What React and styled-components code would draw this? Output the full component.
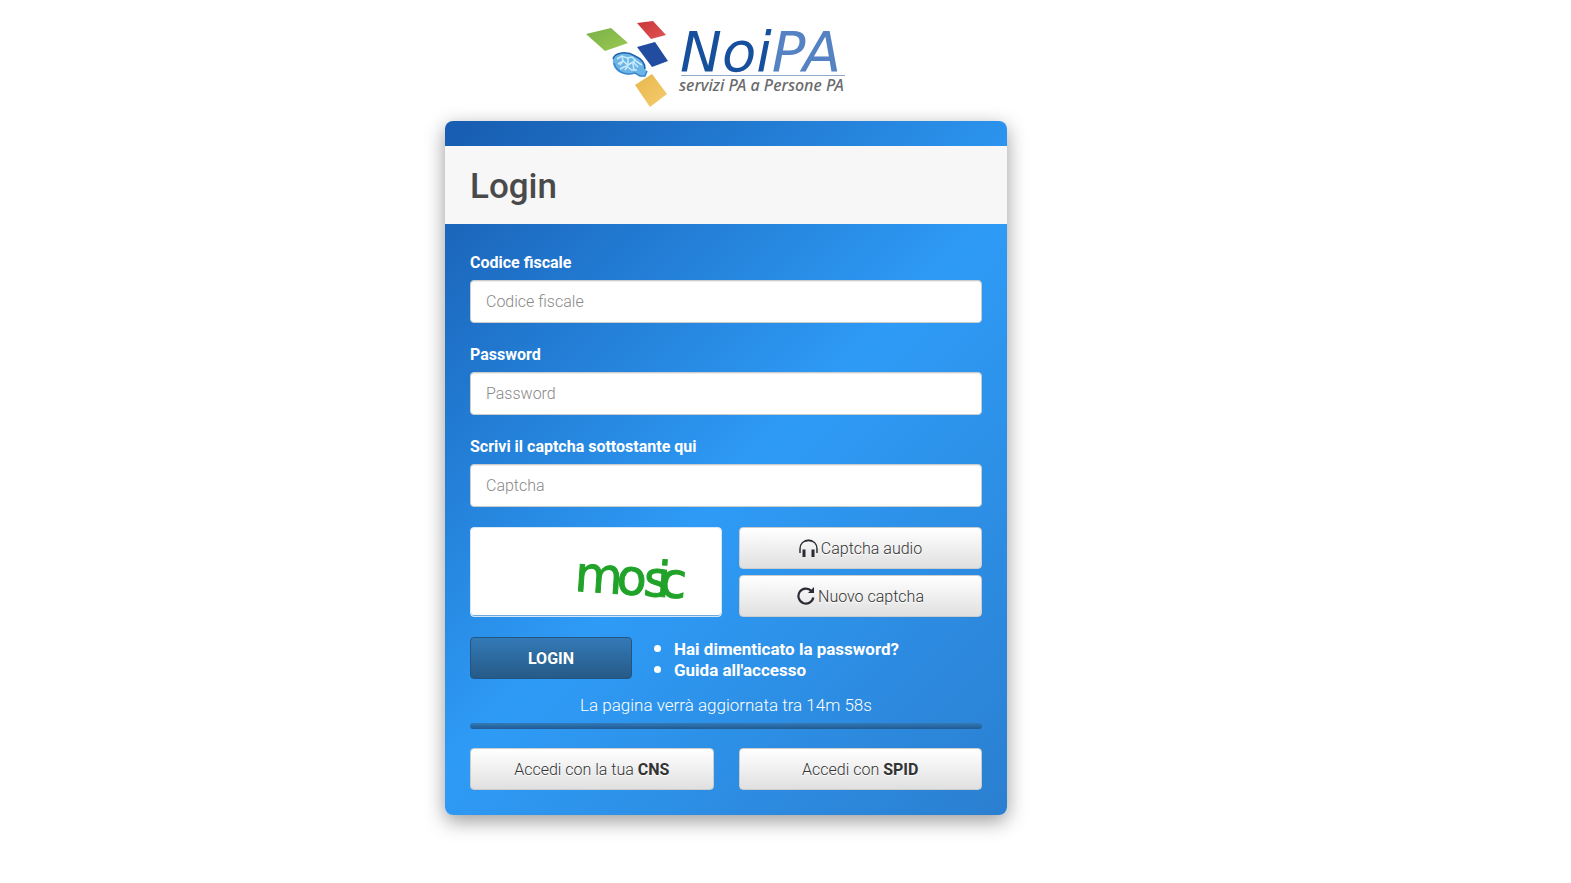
import React, { useState } from "react";
import styled, { createGlobalStyle } from "styled-components";

const GlobalStyle = createGlobalStyle`
  * {
    box-sizing: border-box;
  }
  body {
    margin: 0;
    background: #fff;
    color: #fff;
    font-family: Roboto, "Liberation Sans", sans-serif;
    font-size: 16px;
    font-weight: 300;
  }
`;

const Page = styled.div`
  display: grid;
  grid-template-columns: minmax(16px, 445fr) minmax(0, 562px) minmax(16px, 564fr);
  padding: 16px 0 68px;
`;
const Content = styled.main`
  grid-column: 2;
`;
const LogoWrap = styled.div`
  display: flex;
  padding-left: 25%;
  height: 105px;
`;
const LogoSvg = styled.svg`
  width: 264px;
  height: 96px;
  overflow: visible;
`;
const LogoName = styled.text`
  font: italic 400 56px "DejaVu Sans", sans-serif;
`;
const LogoClaim = styled.text`
  font: italic 500 16px "Noto Sans", sans-serif;
  fill: #6a6a6c;
`;

const Card = styled.section`
  padding: 25px 0;
  border-radius: 8px;
  background: linear-gradient(135deg, #175cb0 0%, #2e9bf6 52%, #2b7fd0 100%);
  box-shadow: 0 6px 20px rgba(0, 0, 0, 0.4);
`;
const CardHeader = styled.header`
  display: flex;
  align-items: center;
  height: 78px;
  padding: 2px 25px 0;
  background: #f7f7f7;
`;
const Title = styled.h1`
  margin: 0;
  color: #4a4a4a;
  font-size: 35px;
  font-weight: 500;
`;
const Form = styled.form`
  display: flex;
  flex-direction: column;
  padding: 26px 25px 0;
`;

const Field = styled.div`
  display: flex;
  flex-direction: column;
  gap: 4px;
  margin-bottom: 19px;
`;
const Label = styled.label`
  font-weight: 700;
  line-height: 26px;
`;
const Input = styled.input`
  height: 43px;
  padding: 0 15px;
  border: 1px solid #ccc;
  border-radius: 4px;
  background: #fff;
  box-shadow: inset 0 1px 1px rgba(0, 0, 0, 0.075);
  color: #555;
  font: inherit;

  &::placeholder {
    color: #888;
    opacity: 1;
  }
`;

const CaptchaRow = styled.div`
  display: grid;
  grid-template-columns: 252fr 243fr;
  gap: 17px;
  margin: 1px 0 20px;
`;
const CaptchaBox = styled.div`
  overflow: hidden;
  border: 1px solid #d5e6f6;
  border-radius: 4px;
  background: #fff;
  box-shadow: inset 0 -1px 0 #6fa9dc;
`;
const CaptchaDrawing = styled.svg`
  display: block;
`;
const CaptchaText = styled.text`
  font: 400 49px "DejaVu Sans", sans-serif;
  fill: #21a229;
  stroke: #21a229;
  stroke-width: 1;
`;
const CaptchaButtons = styled.div`
  display: flex;
  flex-direction: column;
  gap: 6px;
`;

const Button = styled.button`
  display: flex;
  justify-content: center;
  align-items: center;
  gap: 3px;
  height: 42px;
  padding: 0 12px;
  border: 1px solid #ccc;
  border-radius: 4px;
  background: linear-gradient(#fff, #e0e0e0);
  color: #333;
  font: inherit;
  text-shadow: 0 1px 0 #fff;
  white-space: pre;
  cursor: pointer;
`;
const LoginButton = styled(Button)`
  width: 162px;
  border-color: #245580;
  background: linear-gradient(#337ab7, #265a88);
  color: #fff;
  font-weight: 700;
  text-shadow: 0 -1px 0 rgba(0, 0, 0, 0.2);
`;
const Strong = styled.strong`
  font-weight: 700;
`;

const LoginRow = styled.div`
  display: flex;
  align-items: center;
`;
const Links = styled.ul`
  margin: 0;
  padding-left: 42px;
  font-size: 17px;
  font-weight: 700;
  line-height: 21px;
`;
const LinkItem = styled.li`
  height: 21px;

  &::marker {
    font-size: 22px;
  }
`;
const Link = styled.a`
  color: #fff;
  text-decoration: none;
`;

const Timer = styled.p`
  margin: 13px 0 5px;
  font-size: 17px;
  font-weight: 300;
  line-height: 26px;
  text-align: center;
`;
const Bar = styled.div`
  height: 6px;
  border-radius: 4px;
  background: linear-gradient(#337ab7, #205a92);
`;
const AccessRow = styled.div`
  display: grid;
  grid-template-columns: 1fr 1fr;
  gap: 25px;
  margin-top: 19px;
`;

const fields = [
  { id: "cf", type: "text", label: "Codice fiscale", placeholder: "Codice fiscale" },
  { id: "password", type: "password", label: "Password", placeholder: "Password" },
  { id: "captcha", type: "text", label: "Scrivi il captcha sottostante qui", placeholder: "Captcha" },
];

const Logo = () => (
  <LogoSvg viewBox="0 0 264 96" role="img" aria-label="NoiPA">
    <defs>
      <linearGradient id="green" x1="0" y1="0" x2="1" y2="1">
        <stop offset="0" stopColor="#78b04a" />
        <stop offset="1" stopColor="#9cc950" />
      </linearGradient>
      <linearGradient id="red" x1="0" y1="0" x2="1" y2="1">
        <stop offset="0" stopColor="#c9353b" />
        <stop offset="1" stopColor="#df5552" />
      </linearGradient>
      <linearGradient id="yellow" x1="0" y1="0" x2="1" y2="1">
        <stop offset="0" stopColor="#e8b64d" />
        <stop offset="1" stopColor="#f5cc6c" />
      </linearGradient>
    </defs>
    <path d="M0 18 25 12 42 27 19 35Z" fill="url(#green)" />
    <path d="M51 7 67 5 80 19 65 23Z" fill="url(#red)" />
    <path d="M51 31 69 26 82 45 66 51Z" fill="#224ca0" />
    <path d="M49 69 66 58 81 78 64 91Z" fill="url(#yellow)" />
    <path d="M27 43C29 36 40 35 48 39 56 42 60 49 59 53L61 55 59 60 54 60 49 57C36 62 25 53 27 43Z" fill="#6bb5e6" />
    <path d="M27 43C29 36 41 35 49 40 56 43 59 48 59 53" fill="none" stroke="#2263ac" strokeWidth="1.5" />
    <path d="M28 47C30 55 38 60 49 57L54 60H59L61 55" fill="none" stroke="#3b86cb" strokeWidth="1.5" />
    <g fill="none" stroke="#c9ebfb" strokeWidth="1.5">
      <path d="M31 43 36 40 41 42 46 41 51 46 56 49M32 48 37 45 42 49 47 46 52 51M34 53 40 50 46 54 51 54" />
      <path d="M36 40 37 45 34 49M42 42 42 49 39 54M49 43 47 48 48 54" />
    </g>
    <LogoName x="94" y="55" fill="#16509c">
      Noi<tspan fill="#5482c2">PA</tspan>
    </LogoName>
    <path d="M95 59.5H259" stroke="#8fabc9" />
    <LogoClaim x="93" y="75">servizi PA a Persone PA</LogoClaim>
  </LogoSvg>
);

const HeadphonesIcon = () => (
  <svg width="19" height="19" viewBox="0 0 19 19" fill="none" stroke="#2b2b35" aria-hidden="true">
    <path d="M1 14V10C1 4.500 4.500 1.500 9.500 1.500S18 4.500 18 10V14" strokeWidth="1.500" />
    <path d="M6 1.800Q9.500 .8 13 1.800" strokeWidth="1.500" />
    <path d="M5 10.500V18M14 10.500V18" strokeWidth="3" />
  </svg>
);

const RefreshIcon = () => (
  <svg width="18" height="18" viewBox="0 0 18 18" aria-hidden="true">
    <path d="M14.500 4A7.500 7.500 0 1 0 16.300 10.500" fill="none" stroke="#2b2b35" strokeWidth="2.200" />
    <path d="M17 0V6H11Z" fill="#2b2b35" />
  </svg>
);

const App = () => {
  const [values, setValues] = useState({ cf: "", password: "", captcha: "" });

  const handleChange = (e) => {
    setValues({ ...values, [e.target.id]: e.target.value });
  };

  return (
    <>
      <GlobalStyle />
      <Page>
        <Content>
          <LogoWrap>
            <Logo />
          </LogoWrap>
          <Card>
            <CardHeader>
              <Title>Login</Title>
            </CardHeader>
            <Form onSubmit={(e) => e.preventDefault()}>
              {fields.map(({ id, type, label, placeholder }) => (
                <Field key={id}>
                  <Label htmlFor={id}>{label}</Label>
                  <Input
                    id={id}
                    type={type}
                    placeholder={placeholder}
                    value={values[id]}
                    onChange={handleChange}
                  />
                </Field>
              ))}
              <CaptchaRow>
                <CaptchaBox>
                  <CaptchaDrawing width="250" height="88" viewBox="0 0 250 88">
                    <CaptchaText x="103 145 172 185 188" y="63" transform="rotate(4 108 62)">
                      mosic
                    </CaptchaText>
                  </CaptchaDrawing>
                </CaptchaBox>
                <CaptchaButtons>
                  <Button type="button">
                    <HeadphonesIcon />
                    Captcha audio
                  </Button>
                  <Button type="button">
                    <RefreshIcon />
                    Nuovo captcha
                  </Button>
                </CaptchaButtons>
              </CaptchaRow>
              <LoginRow>
                <LoginButton type="submit">LOGIN</LoginButton>
                <Links>
                  <LinkItem>
                    <Link href="#password">Hai dimenticato la password?</Link>
                  </LinkItem>
                  <LinkItem>
                    <Link href="#guida">Guida all'accesso</Link>
                  </LinkItem>
                </Links>
              </LoginRow>
              <Timer>La pagina verrà aggiornata tra 14m 58s</Timer>
              <Bar />
              <AccessRow>
                <Button type="button">
                  <span>
                    Accedi con la tua <Strong>CNS</Strong>
                  </span>
                </Button>
                <Button type="button">
                  <span>
                    Accedi con <Strong>SPID</Strong>
                  </span>
                </Button>
              </AccessRow>
            </Form>
          </Card>
        </Content>
      </Page>
    </>
  );
};

export default App;
